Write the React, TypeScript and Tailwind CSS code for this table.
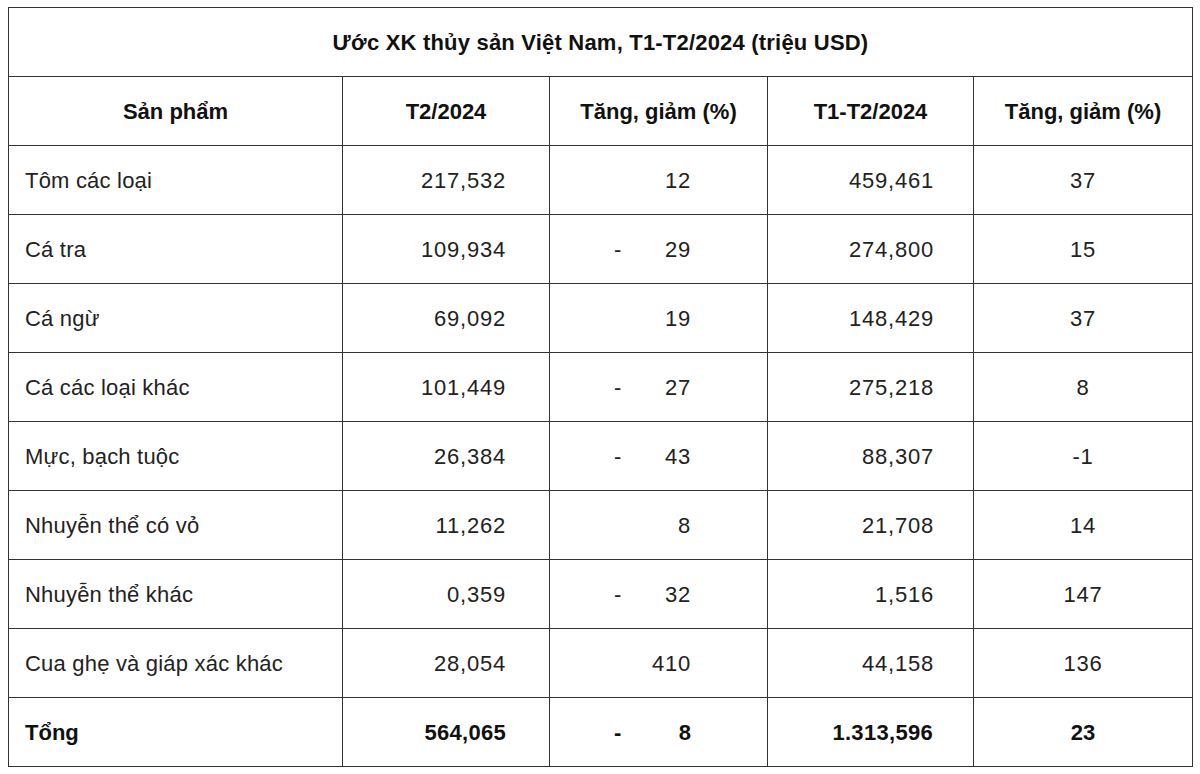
import React from "react";

type Row = { name: string; t2: string; neg1: boolean; p1: string; t12: string; p2: string };

const rows: Row[] = [
  { name: "Tôm các loại", t2: "217,532", neg1: false, p1: "12", t12: "459,461", p2: "37" },
  { name: "Cá tra", t2: "109,934", neg1: true, p1: "29", t12: "274,800", p2: "15" },
  { name: "Cá ngừ", t2: "69,092", neg1: false, p1: "19", t12: "148,429", p2: "37" },
  { name: "Cá các loại khác", t2: "101,449", neg1: true, p1: "27", t12: "275,218", p2: "8" },
  { name: "Mực, bạch tuộc", t2: "26,384", neg1: true, p1: "43", t12: "88,307", p2: "-1" },
  { name: "Nhuyễn thể có vỏ", t2: "11,262", neg1: false, p1: "8", t12: "21,708", p2: "14" },
  { name: "Nhuyễn thể khác", t2: "0,359", neg1: true, p1: "32", t12: "1,516", p2: "147" },
  { name: "Cua ghẹ và giáp xác khác", t2: "28,054", neg1: false, p1: "410", t12: "44,158", p2: "136" },
];

const cell = "border-[1.5px] border-[#333333] h-[69px] p-0 align-middle";

export default function App() {
  return (
    <div className="w-[1200px] h-[774px] bg-white pt-[7px] pl-[8px]" style={{ fontFamily: '"Liberation Sans", Arial, sans-serif' }}>
      <table className="border-collapse table-fixed w-[1184px] text-[22px] text-[#222222]">
        <colgroup>
          <col className="w-[334px]" />
          <col className="w-[207px]" />
          <col className="w-[218px]" />
          <col className="w-[206px]" />
          <col className="w-[219px]" />
        </colgroup>
        <tbody>
          <tr>
            <td colSpan={5} className={`${cell} text-center font-bold text-[#111111] tracking-[0.2px]`}>
              Ước XK thủy sản Việt Nam, T1-T2/2024 (triệu USD)
            </td>
          </tr>
          <tr className="font-bold text-[#111111]">
            <td className={`${cell} text-center`}>Sản phẩm</td>
            <td className={`${cell} text-center`}>T2/2024</td>
            <td className={`${cell} text-center`}>Tăng, giảm (%)</td>
            <td className={`${cell} text-center`}>T1-T2/2024</td>
            <td className={`${cell} text-center`}>Tăng, giảm (%)</td>
          </tr>
          {rows.map((r) => (
            <tr key={r.name}>
              <td className={`${cell} pl-[16px] tracking-[0.2px]`}>{r.name}</td>
              <td className={`${cell} text-right pr-[43px] tracking-[0.8px]`}>{r.t2}</td>
              <td className={cell}>
                <div className="flex items-center justify-between pl-[64px] pr-[76px] tracking-[0.8px]">
                  <span>{r.neg1 ? "-" : ""}</span>
                  <span>{r.p1}</span>
                </div>
              </td>
              <td className={`${cell} text-right pr-[39px] tracking-[0.8px]`}>{r.t12}</td>
              <td className={`${cell} text-center tracking-[0.8px]`}>{r.p2}</td>
            </tr>
          ))}
          <tr className="font-bold text-[#111111]">
            <td className={`${cell} pl-[16px]`}>Tổng</td>
            <td className={`${cell} text-right pr-[43px] tracking-[0.3px]`}>564,065</td>
            <td className={cell}>
              <div className="flex items-center justify-between pl-[64px] pr-[76px]">
                <span>-</span>
                <span>8</span>
              </div>
            </td>
            <td className={`${cell} text-right pr-[40px] tracking-[0.3px]`}>1.313,596</td>
            <td className={`${cell} text-center`}>23</td>
          </tr>
        </tbody>
      </table>
    </div>
  );
}
